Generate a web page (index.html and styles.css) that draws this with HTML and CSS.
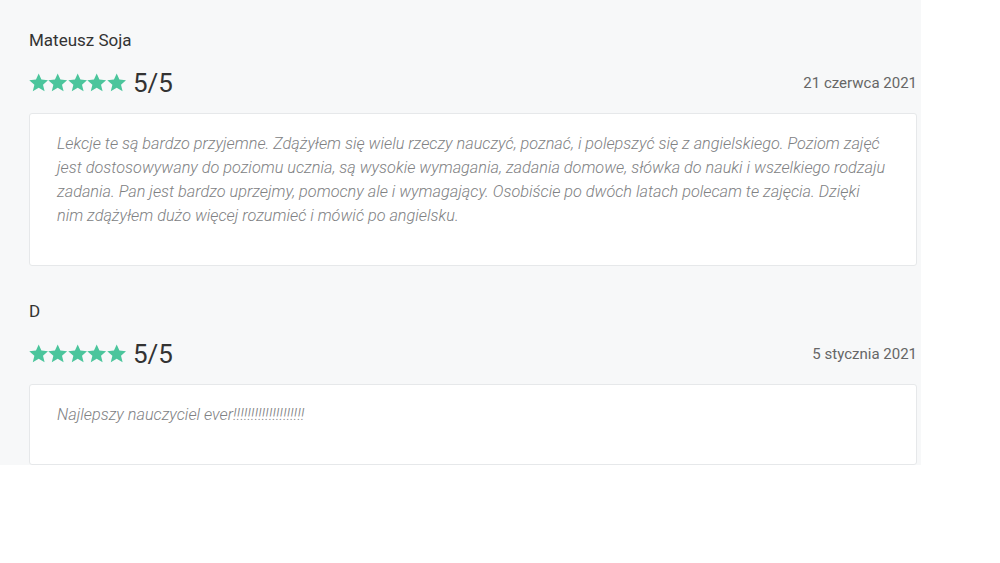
FILE: index.html
```html
<!DOCTYPE html>
<html lang="pl">
<head>
    <meta charset="UTF-8">
    <meta name="viewport" content="width=device-width, initial-scale=1.0">
    <title>Opinie</title>
    <link rel="stylesheet" href="styles.css">
</head>
<body>
    <section class="reviews">
        <article class="review">
            <h3 class="author">Mateusz Soja</h3>
            <div class="rating-row">
                <div class="rating">
                    <span class="stars">
                        <svg viewBox="1 1 22 22"><path d="M12 1.5l3.1 7 7.6.7-5.8 5 1.8 7.5L12 17.7l-6.7 4 1.8-7.5-5.8-5 7.6-.7z"/></svg>
                        <svg viewBox="1 1 22 22"><path d="M12 1.5l3.1 7 7.6.7-5.8 5 1.8 7.5L12 17.7l-6.7 4 1.8-7.5-5.8-5 7.6-.7z"/></svg>
                        <svg viewBox="1 1 22 22"><path d="M12 1.5l3.1 7 7.6.7-5.8 5 1.8 7.5L12 17.7l-6.7 4 1.8-7.5-5.8-5 7.6-.7z"/></svg>
                        <svg viewBox="1 1 22 22"><path d="M12 1.5l3.1 7 7.6.7-5.8 5 1.8 7.5L12 17.7l-6.7 4 1.8-7.5-5.8-5 7.6-.7z"/></svg>
                        <svg viewBox="1 1 22 22"><path d="M12 1.5l3.1 7 7.6.7-5.8 5 1.8 7.5L12 17.7l-6.7 4 1.8-7.5-5.8-5 7.6-.7z"/></svg>
                    </span>
                    <span class="score">5/5</span>
                </div>
                <span class="date">21 czerwca 2021</span>
            </div>
            <div class="card">
                <p>Lekcje te są bardzo przyjemne. Zdążyłem się wielu rzeczy nauczyć, poznać, i polepszyć się z angielskiego. Poziom zajęć jest dostosowywany do poziomu ucznia, są wysokie wymagania, zadania domowe, słówka do nauki i wszelkiego rodzaju zadania. Pan jest bardzo uprzejmy, pomocny ale i wymagający. Osobiście po dwóch latach polecam te zajęcia. Dzięki nim zdążyłem dużo więcej rozumieć i mówić po angielsku.</p>
            </div>
        </article>
        <article class="review">
            <h3 class="author">D</h3>
            <div class="rating-row">
                <div class="rating">
                    <span class="stars">
                        <svg viewBox="1 1 22 22"><path d="M12 1.5l3.1 7 7.6.7-5.8 5 1.8 7.5L12 17.7l-6.7 4 1.8-7.5-5.8-5 7.6-.7z"/></svg>
                        <svg viewBox="1 1 22 22"><path d="M12 1.5l3.1 7 7.6.7-5.8 5 1.8 7.5L12 17.7l-6.7 4 1.8-7.5-5.8-5 7.6-.7z"/></svg>
                        <svg viewBox="1 1 22 22"><path d="M12 1.5l3.1 7 7.6.7-5.8 5 1.8 7.5L12 17.7l-6.7 4 1.8-7.5-5.8-5 7.6-.7z"/></svg>
                        <svg viewBox="1 1 22 22"><path d="M12 1.5l3.1 7 7.6.7-5.8 5 1.8 7.5L12 17.7l-6.7 4 1.8-7.5-5.8-5 7.6-.7z"/></svg>
                        <svg viewBox="1 1 22 22"><path d="M12 1.5l3.1 7 7.6.7-5.8 5 1.8 7.5L12 17.7l-6.7 4 1.8-7.5-5.8-5 7.6-.7z"/></svg>
                    </span>
                    <span class="score">5/5</span>
                </div>
                <span class="date">5 stycznia 2021</span>
            </div>
            <div class="card">
                <p>Najlepszy nauczyciel ever!!!!!!!!!!!!!!!!!!!!</p>
            </div>
        </article>
    </section>
</body>
</html>
```

FILE: styles.css
```css
* {
    padding: 0;
    margin: 0;
    box-sizing: border-box;
}
body {
    background-color: #fff;
    font-family: Roboto, "Liberation Sans", sans-serif;
    color: #333;
}
.reviews {
    width: 921px;
    background-color: #f7f8f9;
    padding: 28px 3px 0 29px;
}
.review + .review {
    margin-top: 33px;
}
.author {
    font-size: 17px;
    font-weight: 400;
    line-height: 24px;
    color: #333;
}
.rating-row {
    display: flex;
    align-items: center;
    justify-content: space-between;
    height: 36px;
    margin-top: 13px;
}
.rating {
    display: flex;
    align-items: center;
}
.stars {
    display: flex;
    align-items: center;
}
.stars svg {
    width: 19.4px;
    height: 19.4px;
    fill: #4bc59c;
}
.score {
    font-size: 26px;
    line-height: 36px;
    margin-left: 7px;
    color: #333;
}
.date {
    font-size: 15px;
    color: #666;
    margin-right: 1px;
}
.card {
    margin-top: 12px;
    margin-right: 1px;
    background-color: #fff;
    border: 1px solid #e6e8ea;
    border-radius: 3px;
    padding: 18px 27px 37px;
}
.card p {
    font-size: 16.25px;
    font-style: italic;
    font-weight: 300;
    line-height: 24px;
    color: #808183;
}
```
